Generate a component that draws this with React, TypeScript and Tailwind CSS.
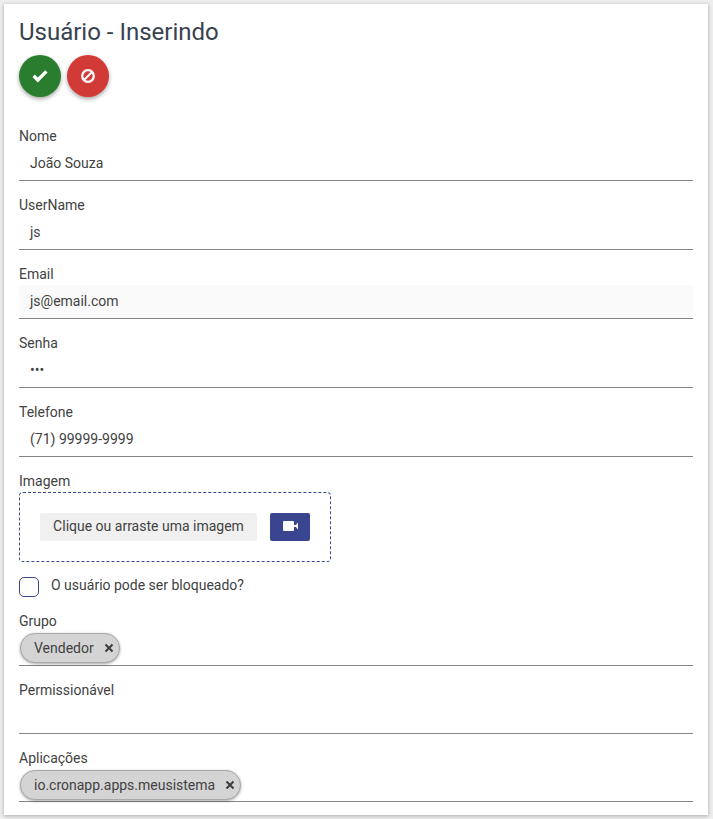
const fields = [
  { label: "Nome", value: "João Souza" },
  { label: "UserName", value: "js" },
  { label: "Email", value: "js@email.com", filled: true },
  { label: "Senha", value: "•••" },
  { label: "Telefone", value: "(71) 99999-9999" },
];

function Field({ label, value, filled }: { label: string; value: string; filled?: boolean }) {
  return (
    <div className="mb-[14px]">
      <label className="block h-[21px] text-[14px] leading-[21px] text-[#424242]">{label}</label>
      <div
        className={`flex h-[34px] items-center border-b border-[#858585] px-[11px] text-[14px] text-[#424242] ${
          filled ? "bg-[#fafafa]" : ""
        }`}
      >
        {value}
      </div>
    </div>
  );
}

function Chip({ text }: { text: string }) {
  return (
    <span className="ml-px flex h-[30px] items-center rounded-[15px] border border-[#a8a8a8] bg-[#d4d4d4] pl-[13px] pr-[5px] text-[14px] text-[#424242] shadow-[0_1px_3px_rgba(0,0,0,0.35)]">
      {text}
      <svg viewBox="0 0 10 10" className="ml-[10px] h-[10px] w-[10px]">
        <path d="M1.5 1.5 L8.5 8.5 M8.5 1.5 L1.5 8.5" stroke="#3d3d3d" strokeWidth="2" fill="none" />
      </svg>
    </span>
  );
}

export default function App() {
  return (
    <div className="h-[819px] overflow-hidden bg-[#eeeeee] p-[4px] font-['Roboto',sans-serif]">
      <div className="h-[811px] w-[704px] bg-white px-[15px] shadow-[0_1px_4px_rgba(0,0,0,0.3)]">
        <h1 className="pt-[12px] text-[24px] leading-[32px] text-[#37424f]">Usuário - Inserindo</h1>
        <div className="mt-[7px] flex gap-[6px]">
          <button className="flex h-[42px] w-[42px] items-center justify-center rounded-full bg-[#2a7d2e] text-white shadow-[0_2px_4px_rgba(0,0,0,0.35)]">
            <svg viewBox="0 0 14 12" className="h-[13px] w-[16px]">
              <path d="M0 6.4 L2.2 4.2 L5 7 L11.8 0.2 L14 2.4 L5 11.6 Z" fill="currentColor" />
            </svg>
          </button>
          <button className="flex h-[42px] w-[42px] items-center justify-center rounded-full bg-[#d13a36] text-white shadow-[0_2px_4px_rgba(0,0,0,0.35)]">
            <svg viewBox="0 0 14 14" className="h-[14px] w-[14px]">
              <circle cx="7" cy="7" r="5.8" stroke="currentColor" strokeWidth="2.2" fill="none" />
              <path d="M3 11 L11 3" stroke="currentColor" strokeWidth="2.2" />
            </svg>
          </button>
        </div>

        <div className="mt-[29px]">
          {fields.map((f) => (
            <Field key={f.label} label={f.label} value={f.value} filled={f.filled} />
          ))}
        </div>

        <label className="block h-[21px] text-[14px] leading-[21px] text-[#424242]">Imagem</label>
        <div className="flex h-[70px] w-[312px] items-center rounded-[4px] border border-dashed border-[#3b4a8f] pl-[20px]">
          <div className="flex h-[28px] w-[217px] items-center justify-center rounded-[2px] bg-[#f0f0f0] pb-[2px] text-[14px] text-[#424242]">
            Clique ou arraste uma imagem
          </div>
          <div className="ml-[13px] flex h-[28px] w-[40px] items-center justify-center rounded-[2px] bg-[#3a4590] pb-[3px] text-white">
            <svg viewBox="0 0 15 10" className="h-[10px] w-[15px]">
              <rect x="0" y="0" width="11" height="10" rx="1" fill="currentColor" />
              <path d="M12 5 L15 1.5 V8.5 Z M11 4 H13 V6 H11 Z" fill="currentColor" />
            </svg>
          </div>
        </div>

        <div className="mt-[15px] flex h-[20px] items-center">
          <span className="h-[20px] w-[20px] rounded-[5px] border border-[#3a4590]" />
          <span className="ml-[12px] -mt-[4px] text-[14px] text-[#424242]">O usuário pode ser bloqueado?</span>
        </div>

        <label className="mt-[14px] block h-[21px] text-[14px] leading-[21px] text-[#424242]">Grupo</label>
        <div className="flex h-[34px] items-start border-b border-[#858585] pt-px">
          <Chip text="Vendedor" />
        </div>

        <label className="mt-[14px] block h-[21px] text-[14px] leading-[21px] text-[#424242]">Permissionável</label>
        <div className="h-[33px] border-b border-[#858585]" />

        <label className="mt-[14px] block h-[21px] text-[14px] leading-[21px] text-[#424242]">Aplicações</label>
        <div className="flex h-[33px] items-start border-b border-[#858585] pt-px">
          <Chip text="io.cronapp.apps.meusistema" />
        </div>
      </div>
    </div>
  );
}
